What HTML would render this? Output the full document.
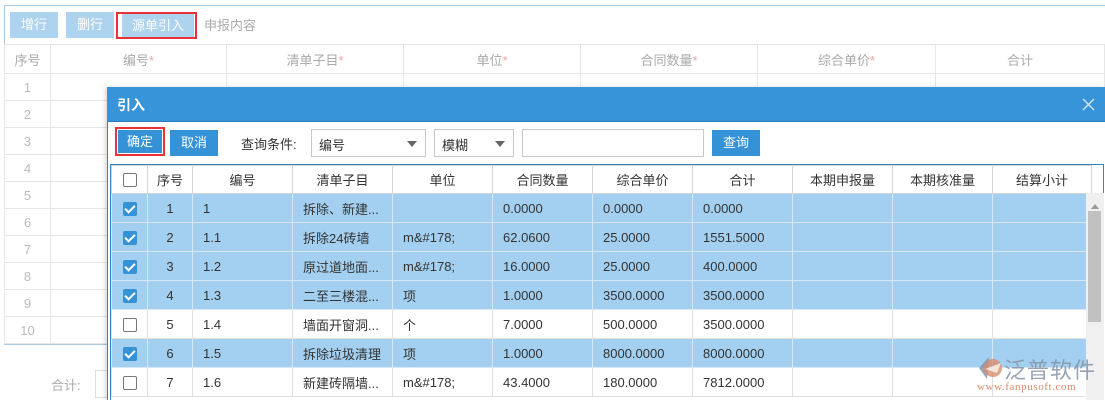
<!DOCTYPE html>
<html style="overflow:hidden;width:1105px;height:400px"><head><meta charset="utf-8"><style>
*{margin:0;padding:0;box-sizing:border-box}
body{width:1105px;height:400px;overflow:hidden;background:#fff;font-family:"Liberation Sans","Noto Sans CJK SC",sans-serif;font-size:13px;color:#333;position:relative}
.a{position:absolute}
.btn{position:absolute;color:#fff;text-align:center;font-size:13px}
.lb{background:#aed3ef}
.db{background:#3592d6}
.bg td{border:1px solid #e6e6e6;color:#bbb;text-align:center;height:27px;font-size:13px}
.bg th{border:1px solid #e6e6e6;color:#aaa;font-weight:normal;height:29px}
.star{color:#f3a0a0}
.dg{border-collapse:collapse;table-layout:fixed}
.dg th{border:1px solid #d4d4d4;font-weight:normal;height:28px;background:#fff;color:#333}
.dg td{border:1px solid #e0e0e0;height:29px;padding-left:10px;white-space:nowrap;overflow:hidden}
.dg td.c{text-align:center;padding:0}
.s td{background:#a3d0f0;border-color:#d8e8f4}
.cb{display:inline-block;width:14px;height:14px;border:1px solid #777;border-radius:2px;background:#fff;vertical-align:middle}
.ck{display:inline-block;width:14px;height:14px;border-radius:2px;background:#3592d6;vertical-align:middle;position:relative}
.ck:after{content:"";position:absolute;left:4px;top:1px;width:4px;height:8px;border:solid #fff;border-width:0 2px 2px 0;transform:rotate(45deg)}
.sel{position:absolute;border:1px solid #c8c8c8;height:28px;background:#fff;padding:5px 7px}
.sel:after{content:"";position:absolute;right:8px;top:11px;border:5px solid transparent;border-top:6px solid #666}
</style></head><body>
<div class="a" style="left:4px;top:5px;width:1101px;height:340px;border:1px solid #a9cbe6;border-right:none"></div>
<div class="btn lb" style="left:10px;top:12px;width:48px;height:26px;line-height:26px">增行</div>
<div class="btn lb" style="left:66px;top:12px;width:48px;height:26px;line-height:26px">删行</div>
<div class="a" style="left:116px;top:12px;width:81px;height:27px;border:2px solid #e8323a"></div>
<div class="btn lb" style="left:122px;top:14px;width:72px;height:23px;line-height:23px">源单引入</div>
<div class="a" style="left:204px;top:15px;color:#aaa">申报内容</div>
<table class="bg a" style="left:4px;top:44px;width:1101px;border-collapse:collapse;table-layout:fixed">
<colgroup><col style="width:46px"><col style="width:176px"><col style="width:177px"><col style="width:177px"><col style="width:177px"><col style="width:178px"><col></colgroup>
<tr><th>序号</th><th>编号<span class="star">*</span></th><th>清单子目<span class="star">*</span></th><th>单位<span class="star">*</span></th><th>合同数量<span class="star">*</span></th><th>综合单价<span class="star">*</span></th><th>合计</th></tr>
<tr><td>1</td><td></td><td></td><td></td><td></td><td></td><td></td></tr>
<tr><td>2</td><td></td><td></td><td></td><td></td><td></td><td></td></tr>
<tr><td>3</td><td></td><td></td><td></td><td></td><td></td><td></td></tr>
<tr><td>4</td><td></td><td></td><td></td><td></td><td></td><td></td></tr>
<tr><td>5</td><td></td><td></td><td></td><td></td><td></td><td></td></tr>
<tr><td>6</td><td></td><td></td><td></td><td></td><td></td><td></td></tr>
<tr><td>7</td><td></td><td></td><td></td><td></td><td></td><td></td></tr>
<tr><td>8</td><td></td><td></td><td></td><td></td><td></td><td></td></tr>
<tr><td>9</td><td></td><td></td><td></td><td></td><td></td><td></td></tr>
<tr><td>10</td><td></td><td></td><td></td><td></td><td></td><td></td></tr>
</table>
<div class="a" style="left:51px;top:375px;color:#aaa">合计:</div>
<div class="a" style="left:95px;top:370px;width:20px;height:28px;border:1px solid #ddd"></div>

<div class="a" style="left:107px;top:87px;width:998px;height:313px;background:#fff;border-left:1px solid #2f86c8;box-shadow:-2px 0 4px rgba(0,0,0,.15)"></div>
<div class="a" style="left:107px;top:87px;width:998px;height:35px;background:#3794d8;border-bottom:1px solid #2c7dbd"></div>
<div class="a" style="left:117px;top:95px;color:#fff;font-weight:bold;font-size:14px">引入</div>
<svg class="a" style="left:1082px;top:98px" width="13" height="13" viewBox="0 0 13 13"><path d="M1 1 L12 12 M12 1 L1 12" stroke="#d6e9f8" stroke-width="1.3"/></svg>
<div class="a" style="left:115px;top:127px;width:50px;height:29px;border:2px solid #e8323a"></div>
<div class="btn db" style="left:118px;top:130px;width:44px;height:23px;line-height:23px">确定</div>
<div class="btn db" style="left:170px;top:130px;width:48px;height:26px;line-height:26px">取消</div>
<div class="a" style="left:241px;top:134px">查询条件:</div>
<div class="sel" style="left:311px;top:129px;width:115px">编号</div>
<div class="sel" style="left:434px;top:129px;width:80px">模糊</div>
<div class="a" style="left:522px;top:129px;width:182px;height:28px;border:1px solid #c8c8c8"></div>
<div class="btn db" style="left:712px;top:130px;width:48px;height:26px;line-height:26px">查询</div>

<div class="a" style="left:110px;top:164px;width:994px;height:236px;border:1px solid #2f86c8;border-bottom:none;overflow:hidden">
<table class="dg">
<colgroup><col style="width:36px"><col style="width:45px"><col style="width:100px"><col style="width:100px"><col style="width:100px"><col style="width:100px"><col style="width:100px"><col style="width:100px"><col style="width:100px"><col style="width:100px"><col style="width:99px"></colgroup>
<tr><th><span class="cb"></span></th><th>序号</th><th>编号</th><th>清单子目</th><th>单位</th><th>合同数量</th><th>综合单价</th><th>合计</th><th>本期申报量</th><th>本期核准量</th><th>结算小计</th></tr>
<tr class="s"><td class="c"><span class="ck"></span></td><td class="c">1</td><td>1</td><td>拆除、新建...</td><td></td><td>0.0000</td><td>0.0000</td><td>0.0000</td><td></td><td></td><td></td></tr>
<tr class="s"><td class="c"><span class="ck"></span></td><td class="c">2</td><td>1.1</td><td>拆除24砖墙</td><td>m&amp;#178;</td><td>62.0600</td><td>25.0000</td><td>1551.5000</td><td></td><td></td><td></td></tr>
<tr class="s"><td class="c"><span class="ck"></span></td><td class="c">3</td><td>1.2</td><td>原过道地面...</td><td>m&amp;#178;</td><td>16.0000</td><td>25.0000</td><td>400.0000</td><td></td><td></td><td></td></tr>
<tr class="s"><td class="c"><span class="ck"></span></td><td class="c">4</td><td>1.3</td><td>二至三楼混...</td><td>项</td><td>1.0000</td><td>3500.0000</td><td>3500.0000</td><td></td><td></td><td></td></tr>
<tr><td class="c"><span class="cb"></span></td><td class="c">5</td><td>1.4</td><td>墙面开窗洞...</td><td>个</td><td>7.0000</td><td>500.0000</td><td>3500.0000</td><td></td><td></td><td></td></tr>
<tr class="s"><td class="c"><span class="ck"></span></td><td class="c">6</td><td>1.5</td><td>拆除垃圾清理</td><td>项</td><td>1.0000</td><td>8000.0000</td><td>8000.0000</td><td></td><td></td><td></td></tr>
<tr><td class="c"><span class="cb"></span></td><td class="c">7</td><td>1.6</td><td>新建砖隔墙...</td><td>m&amp;#178;</td><td>43.4000</td><td>180.0000</td><td>7812.0000</td><td></td><td></td><td></td></tr>
</table>
</div>
<div class="a" style="left:1086px;top:193px;width:18px;height:207px;background:#f0f0f0"></div>
<div class="a" style="left:1091px;top:200px;border:4px solid transparent;border-bottom:5px solid #999;width:0;height:0"></div>
<div class="a" style="left:1088px;top:211px;width:13px;height:111px;background:#c1c1c1"></div>

<svg class="a" style="left:975px;top:355px" width="30" height="26" viewBox="0 0 30 26"><path d="M14 2 L4 13 L12 24 Z" fill="#7d8fa8" opacity=".8"/><circle cx="18" cy="13" r="9" fill="#d98c6a" opacity=".8"/><path d="M10 14 L26 8 L22 18 Z" fill="#fff" opacity=".7"/></svg>
<div class="a" style="left:1004px;top:353px;font-size:22px;color:#8594a8;letter-spacing:1px;opacity:.85">泛普软件</div>
<div class="a" style="left:977px;top:381px;font-size:11px;color:#d98c6a;font-family:'Liberation Serif',serif;letter-spacing:.6px">www.fanpusoft.com</div>
</body></html>
